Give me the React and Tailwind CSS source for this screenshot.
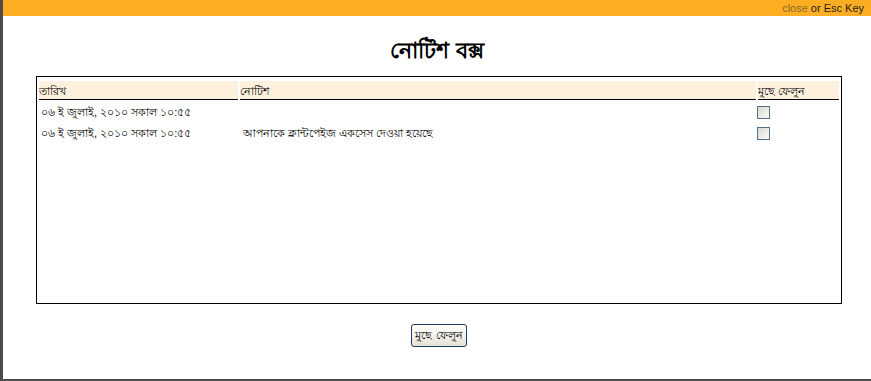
import React from 'react';

const rows = [
    { date: "০৬ ই জুলাই, ২০১০ সকাল ১০:৫৫", notice: "" },
    { date: "০৬ ই জুলাই, ২০১০ সকাল ১০:৫৫", notice: "আপনাকে ক্লান্টপেইজ একসেস দেওয়া হয়েছে" },
];

const NoticeBox = () => {
    return (
        <div className="w-[871px] h-[381px] bg-white border-l-[3px] border-b-2 border-[#4b4b4b] flex flex-col overflow-hidden font-['Liberation_Sans','Noto_Sans',sans-serif]">
            {/* Top bar */}
            <div className="h-[16px] bg-[#fdad22] flex items-center justify-end pr-[7px] text-[11px] leading-none">
                <span className="text-[#8c6a2c]">close</span>
                <span className="text-[#1d1d1d] ml-[3px]">or Esc Key</span>
            </div>

            {/* Title */}
            <h1 className="text-center text-[22px] font-bold text-black mt-[21px] leading-[28px]">নোটিশ বক্স</h1>

            {/* Table box */}
            <div className="ml-[33px] mt-[11px] w-[806px] h-[228px] border border-black pt-[2px]">
                <table className="w-full border-separate border-spacing-[2px] text-[11px] text-black">
                    <thead>
                        <tr>
                            <th className="w-[199px] text-left font-normal bg-[#fdf1de] border-b border-black h-[19px] px-0 align-bottom">তারিখ</th>
                            <th className="text-left font-normal bg-[#fdf1de] border-b border-black h-[19px] px-0 align-bottom">নোটিশ</th>
                            <th className="w-[81px] text-left font-normal bg-[#fdf1de] border-b border-black h-[19px] px-0 align-bottom">মুছে ফেলুন</th>
                        </tr>
                    </thead>
                    <tbody>
                        {rows.map((r, i) => (
                            <tr key={i}>
                                <td className="h-[19px] pl-[2px] pt-[1px] align-middle">{r.date}</td>
                                <td className="h-[19px] pl-[3px] pt-[1px] align-middle">{r.notice}</td>
                                <td className="h-[19px] pt-[1px] align-middle">
                                    <input
                                        type="checkbox"
                                        className="appearance-none block w-[13px] h-[13px] border border-[#55718a] bg-gradient-to-br from-[#d8d8d2] to-[#fbfbfa] my-0 mr-0 ml-[-1px]"
                                    />
                                </td>
                            </tr>
                        ))}
                    </tbody>
                </table>
            </div>

            {/* Delete button */}
            <div className="flex justify-center mt-[20px] pl-[4px]">
                <button className="h-[23px] px-[3px] text-[11px] text-black border border-[#1e3d6b] rounded-[3px] bg-gradient-to-b from-white to-[#e6e3d6] leading-none">
                    মুছে ফেলুন
                </button>
            </div>
        </div>
    );
};

export default function App() {
    return <NoticeBox />;
}
